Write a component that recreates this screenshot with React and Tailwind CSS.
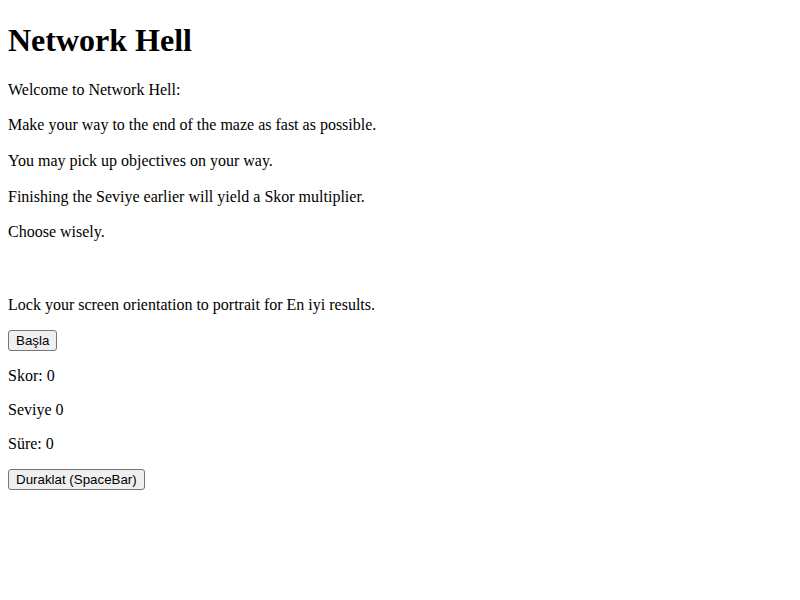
export default function App() {
  const p = "my-[17.6px]";
  const q = "my-4";
  const btn =
    "block font-['Liberation_Sans',Arial,sans-serif] text-[13.333px] leading-[normal] px-[7px] py-[2px] bg-[#efefef] border border-[#767676] rounded-[3px] text-black";
  return (
    <div className="bg-white min-h-[600px] px-2 py-[1px] font-['Liberation_Serif','Times_New_Roman',serif] text-[16px] leading-[normal] text-black">
      <h1 className="text-[32px] font-bold my-[21.44px]">Network Hell</h1>
      <p className={p}>Welcome to Network Hell:</p>
      <p className={p}>Make your way to the end of the maze as fast as possible.</p>
      <p className={p}>You may pick up objectives on your way.</p>
      <p className={p}>Finishing the Seviye earlier will yield a Skor multiplier.</p>
      <p className={p}>Choose wisely.</p>
      <p className={p}>
        <br />
      </p>
      <p className="mt-[19.6px] mb-[15.6px]">Lock your screen orientation to portrait for En iyi results.</p>
      <button className={btn}>Başla</button>
      <p className={q}>Skor: 0</p>
      <p className={q}>Seviye 0</p>
      <p className={q}>Süre: 0</p>
      <button className={btn}>Duraklat (SpaceBar)</button>
    </div>
  );
}
